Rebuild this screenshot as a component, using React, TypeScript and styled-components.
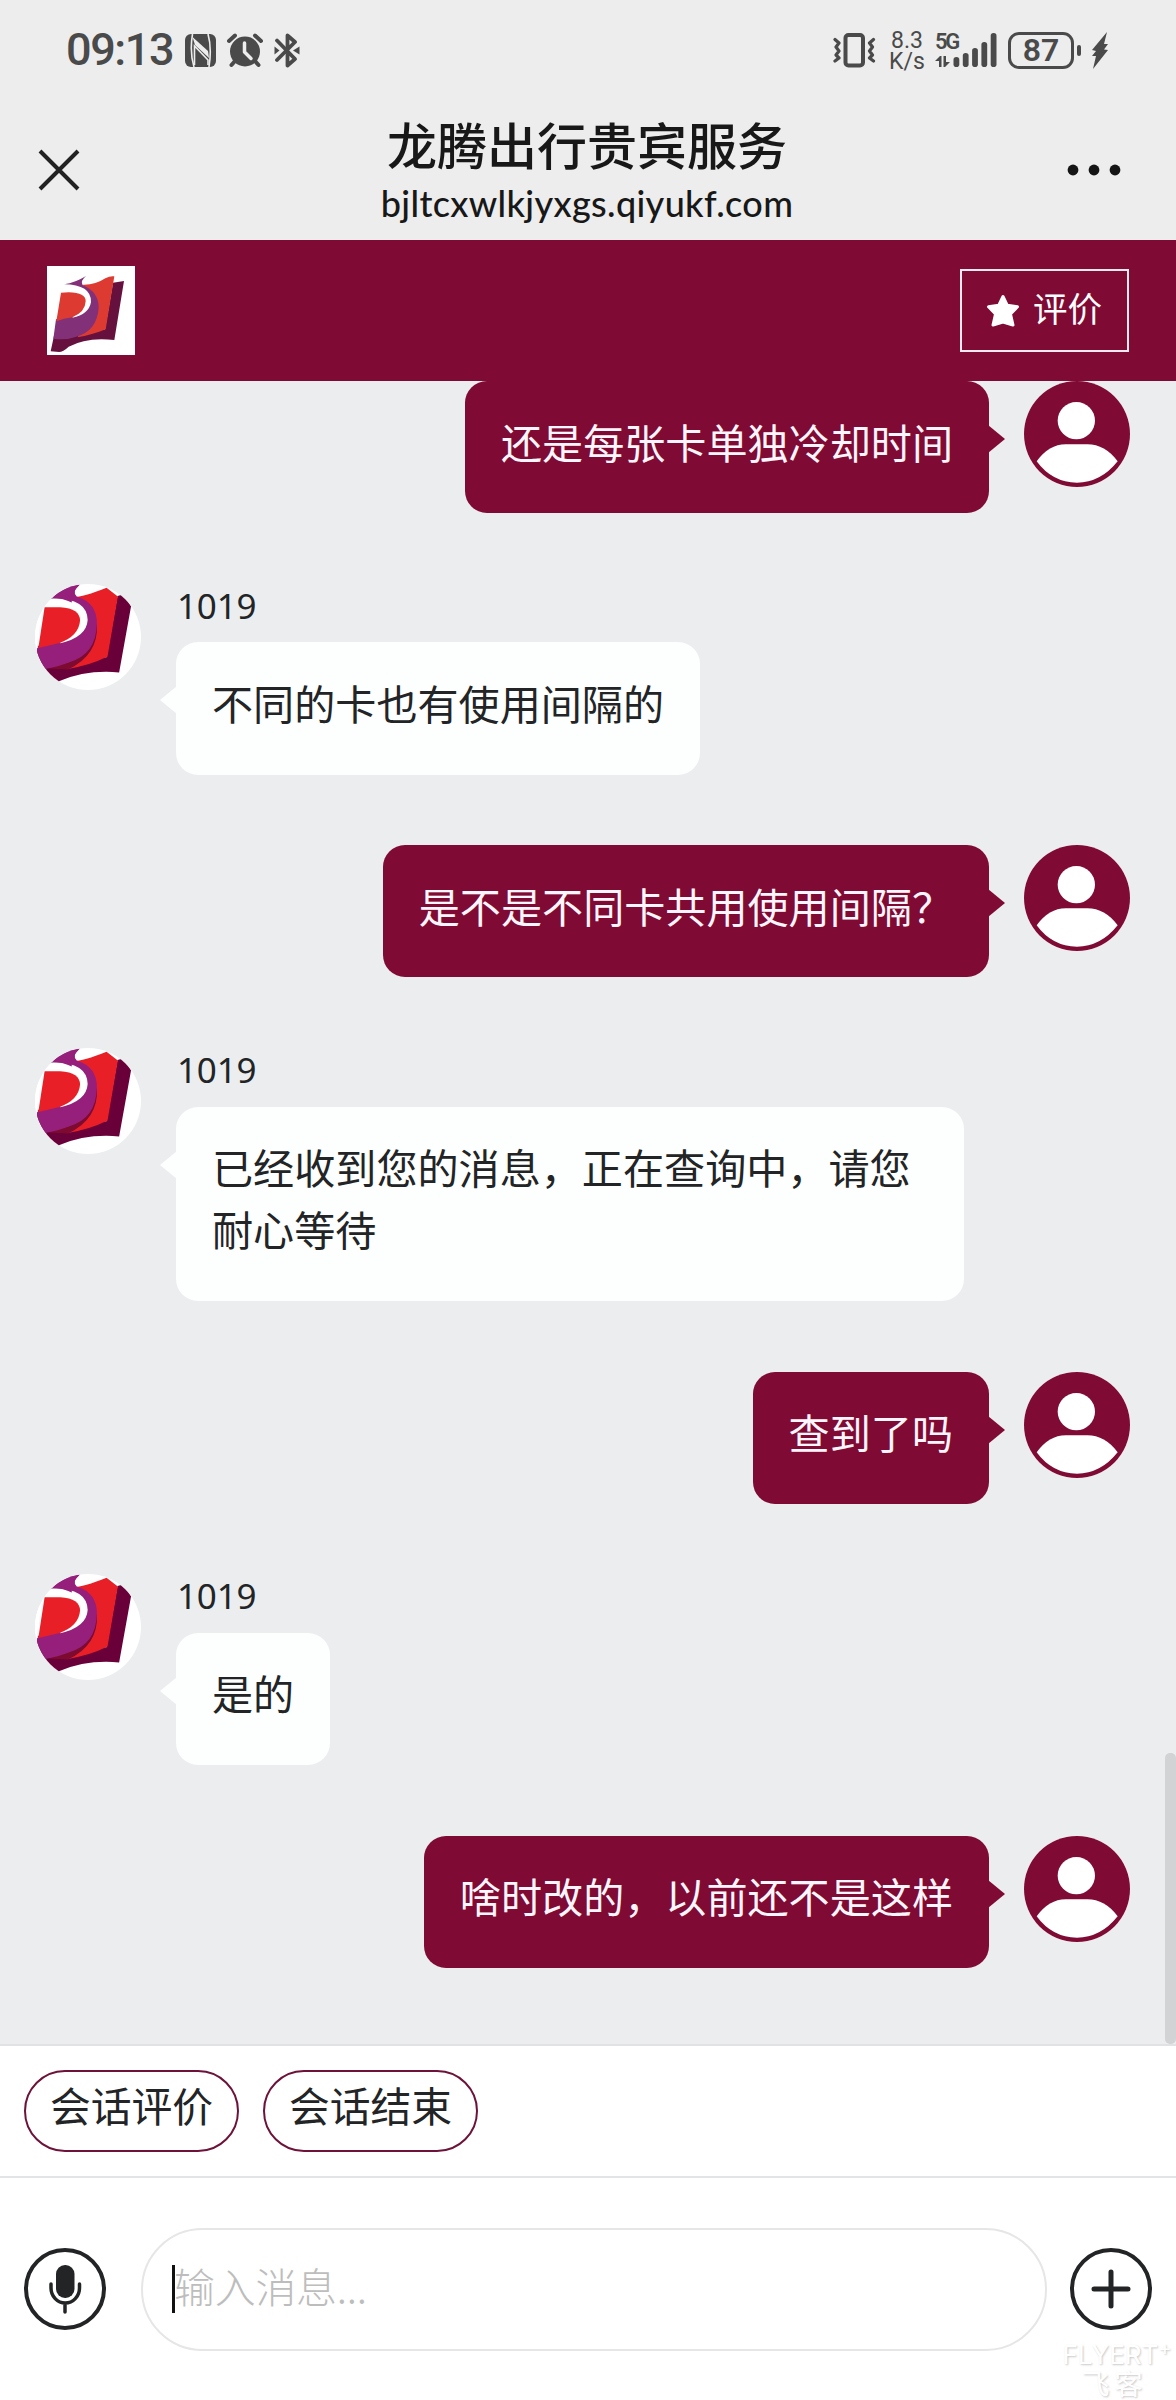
import React from 'react';
import styled, { createGlobalStyle } from 'styled-components';

const wine = '#7f0a34';
const ink = '#222426';
const statusInk = '#4a4a4a';

const GlobalStyle = createGlobalStyle`
  * { box-sizing: border-box; }
  body { margin: 0; background: #fff; }
`;

const Screen = styled.div`
  position: relative;
  display: flex;
  flex-direction: column;
  width: 1176px;
  height: 2400px;
  overflow: hidden;
  background: #fff;
  color: ${ink};
  font-family: 'Noto Sans CJK SC', sans-serif;
`;

/* ---------- status bar ---------- */

const StatusBar = styled.div`
  display: flex;
  flex: none;
  justify-content: space-between;
  align-items: center;
  height: 100px;
  padding: 0 68px 0 66px;
  background: #ededed;
  color: ${statusInk};
  font-family: Roboto, sans-serif;
`;

const StatusGroup = styled.div<{ $gap: number }>`
  display: flex;
  align-items: center;
  gap: ${p => p.$gap}px;
`;

const Clock = styled.span`
  width: 108px;
  font-family: Roboto, sans-serif;
  font-size: 45px;
  font-weight: 500;
  line-height: 54px;
  letter-spacing: -1.4px;
  white-space: nowrap;
`;

const Speed = styled.div`
  display: flex;
  flex-direction: column;
  align-items: center;
  width: 34px;
  font-size: 23px;
  line-height: 21px;
  margin: 2px 0 0 3px;
  white-space: nowrap;

  span {
    display: block;
    height: 21px;
    line-height: 21px;
  }
`;

const Network = styled.div`
  display: flex;
  align-items: flex-end;
  height: 34px;
`;

const NetworkType = styled.div`
  display: flex;
  flex-direction: column;
  justify-content: space-between;
  width: 18px;
  height: 34px;
  font-size: 22px;
  font-weight: 600;
  line-height: 17px;
  letter-spacing: -2.4px;
  white-space: nowrap;
`;

const BatteryWrap = styled.div`
  display: flex;
  align-items: center;
  gap: 3px;
`;

const BatteryBody = styled.div`
  display: flex;
  justify-content: center;
  align-items: center;
  width: 66px;
  height: 37px;
  border: 3px solid ${statusInk};
  border-radius: 11px;
  font-size: 32px;
  font-weight: 600;
  line-height: 31px;
`;

const BatteryNub = styled.div`
  width: 4px;
  height: 11px;
  border-radius: 2px;
  background: ${statusInk};
`;

/* ---------- navigation header ---------- */

const NavBar = styled.header`
  display: grid;
  grid-template-columns: 100px 1fr 100px;
  align-items: center;
  flex: none;
  height: 140px;
  padding: 0 37px;
  background: #ededed;
  color: #181818;
`;

const NavIcon = styled.div<{ $end?: boolean }>`
  display: flex;
  justify-content: ${p => (p.$end ? 'flex-end' : 'flex-start')};
  padding-right: ${p => (p.$end ? 18 : 0)}px;
`;

const Titles = styled.div`
  display: flex;
  flex-direction: column;
  align-items: center;
  height: 140px;
  padding: 10px 2px 0 0;
`;

const Title = styled.h1`
  margin: 0;
  font-size: 50px;
  font-weight: 500;
  line-height: 66px;
`;

const Domain = styled.div`
  margin-top: 5px;
  font-family: Lato, sans-serif;
  font-size: 36px;
  font-weight: 500;
  line-height: 44px;
  letter-spacing: 0.35px;
`;

/* ---------- brand bar ---------- */

const BrandBar = styled.div`
  display: flex;
  flex: none;
  justify-content: space-between;
  align-items: center;
  height: 141px;
  padding: 0 47px;
  background: ${wine};
`;

const BrandLogo = styled.div`
  width: 88px;
  height: 89px;
  background: #fff;
`;

const RateButton = styled.button`
  display: flex;
  align-items: center;
  gap: 13px;
  width: 169px;
  height: 83px;
  padding: 0 0 0 24px;
  border: 2px solid #f6eaf2;
  background: transparent;
  color: #fff;
  font-family: 'Noto Sans CJK SC', sans-serif;
  font-size: 34.5px;
  line-height: 40px;
`;

const RateLabel = styled.span`
  margin-top: -7px;
`;

/* ---------- conversation ---------- */

const Conversation = styled.main`
  position: relative;
  display: flex;
  flex: none;
  flex-direction: column;
  gap: 70.7px;
  height: 1665px;
  padding: 0 46px 0 35px;
  border-bottom: 2px solid #e0e2e4;
  background: #ebedef;
`;

const Row = styled.div<{ $mine: boolean }>`
  display: flex;
  flex-direction: ${p => (p.$mine ? 'row-reverse' : 'row')};
  align-items: flex-start;
  gap: 35px;
`;

const Avatar = styled.div`
  flex: none;
  width: 106px;
  height: 106px;
  border-radius: 50%;
  overflow: hidden;
  background: #fff;
`;

const Column = styled.div`
  display: flex;
  flex-direction: column;
  align-items: flex-start;
`;

const Sender = styled.div`
  height: 58.5px;
  padding-left: 1px;
  font-family: 'Noto Sans', sans-serif;
  font-size: 35px;
  line-height: 44px;
  letter-spacing: -0.2px;
`;

const Bubble = styled.div<{ $mine: boolean }>`
  position: relative;
  max-width: 788px;
  padding: 28.500px 36px 41.700px;
  border-radius: 22px;
  background: ${p => (p.$mine ? wine : '#fdfefe')};
  color: ${p => (p.$mine ? '#fff6fc' : ink)};
  font-size: 41.1px;
  line-height: 62px;

  &::after {
    content: '';
    position: absolute;
    top: 44px;
    ${p => (p.$mine ? 'right: -16px;' : 'left: -16px;')}
    border: 14px solid transparent;
    ${p =>
      p.$mine
        ? `border-left: 17px solid ${wine}; border-right: 0;`
        : 'border-right: 17px solid #fdfefe; border-left: 0;'}
  }
`;

const ScrollThumb = styled.div`
  position: absolute;
  right: 0;
  bottom: 0;
  width: 11px;
  height: 291px;
  border-radius: 5px;
  background: #d1d3d5;
`;

/* ---------- footer ---------- */

const QuickActions = styled.div`
  display: flex;
  flex: none;
  align-items: center;
  gap: 24px;
  height: 132px;
  padding: 0 24px;
  border-bottom: 2px solid #e3e4e5;
`;

const Chip = styled.button`
  width: 215px;
  height: 82px;
  padding: 0 0 12px;
  border: 2px solid #6d1238;
  border-radius: 41px;
  background: transparent;
  color: ${ink};
  font-family: 'Noto Sans CJK SC', sans-serif;
  font-size: 40.8px;
  line-height: 60px;
  white-space: nowrap;
`;

const Composer = styled.div`
  display: flex;
  flex: none;
  align-items: center;
  height: 222px;
  padding: 0 24px;
`;

const InputBox = styled.div`
  display: flex;
  align-items: center;
  width: 906px;
  height: 123px;
  margin: 0 23px 0 35px;
  padding-left: 29px;
  border: 2px solid #e6e6e6;
  border-radius: 62px;
`;

const Caret = styled.span`
  width: 3px;
  height: 48px;
  background: #111;
`;

const Placeholder = styled.span`
  margin: -9px 0 0 -1px;
  color: #bdbdbd;
  font-size: 41px;
  font-weight: 300;
  line-height: 60px;
  letter-spacing: -0.3px;
`;

const Watermark = styled.div`
  position: absolute;
  right: 0;
  bottom: 0;
  display: flex;
  flex-direction: column;
  align-items: center;
  width: 118px;
  color: #fff;
  text-shadow: 1px 1px 2px rgba(0, 0, 0, 0.22);
`;

const WatermarkLatin = styled.div`
  display: flex;
  align-items: flex-start;
  font-family: Inter, sans-serif;
  font-size: 26px;
  line-height: 26px;
  white-space: nowrap;
`;

const WatermarkPlus = styled.span`
  font-size: 20px;
  line-height: 12px;
`;

const WatermarkHan = styled.div`
  display: flex;
  gap: 5px;
  height: 32px;
  padding-right: 10px;
  font-size: 28px;
  line-height: 30px;
`;

/* ---------- drawings ---------- */

const NfcIcon = () => (
  <svg width="31" height="33" viewBox="0 0 31 33">
    <rect width="31" height="33" rx="6" fill={statusInk} />
    <path d="M7.500 0 Q4.500 18 9 33 M23 0 Q27 14 24 33" stroke="#ededed" strokeWidth="1.600" fill="none" />
    <path d="M7.500 3 L23 17 L24 24 L10 11Z" fill="#ededed" />
    <path d="M9.500 31 V12 L23 26 V31" stroke="#ededed" strokeWidth="1.600" fill="none" />
  </svg>
);

const AlarmIcon = () => (
  <svg width="36" height="35" viewBox="0 0 36 35">
    <circle cx="18" cy="18.500" r="15" fill={statusInk} />
    <path d="M2 8 L8 2.500 M28 2.500 L34 8 M8 28 L4.500 32 M28 28 L31.500 32" stroke={statusInk} strokeWidth="4" strokeLinecap="round" />
    <path d="M17.500 10 V19 L24 25.500" stroke="#ededed" strokeWidth="3.500" strokeLinecap="round" strokeLinejoin="round" fill="none" />
  </svg>
);

const BluetoothIcon = () => (
  <svg width="26" height="35" viewBox="0 0 26 35">
    <path d="M3 7.500 L21 26 L13.500 32.500 V22 M13.500 13 V2.500 L21 9 L3 27" stroke={statusInk} strokeWidth="3.800" strokeLinecap="round" strokeLinejoin="round" fill="none" />
    <path d="M0.500 13.500 L5.500 17.500 L0.500 21.500Z M25.500 13.500 L19 17.500 L25.500 21.500Z" fill={statusInk} />
  </svg>
);

const VibrateIcon = () => (
  <svg width="43" height="35" viewBox="0 0 43 35">
    <rect x="12.500" y="2" width="17.500" height="30.500" rx="3" stroke={statusInk} strokeWidth="4" fill="none" />
    <path d="M2 6.500 L6 10 L3 14 L6 18 L3 22 L6 25 L2 28 M40.500 6.500 L36.500 10 L39.500 14 L36.500 18 L39.500 22 L36.500 25 L40.500 28" stroke={statusInk} strokeWidth="3.200" fill="none" strokeLinecap="round" strokeLinejoin="round" />
  </svg>
);

const DataArrows = () => (
  <svg width="15" height="11" viewBox="0 0 15 11">
    <path d="M0 5 L5 0 H6.500 V11 H4 V5Z M8.500 0 H11 V6 H15 L10 11 H8.500Z" fill={statusInk} />
  </svg>
);

const SignalIcon = () => (
  <svg width="44" height="34" viewBox="0 0 44 34">
    {[10, 14, 19, 25, 34].map((h, i) => (
      <rect key={h} x={0.5 + i * 9.3} y={34 - h} width="5.800" height={h} rx="2.800" fill={statusInk} />
    ))}
  </svg>
);

const BoltIcon = () => (
  <svg width="16" height="37" viewBox="0 0 16 37">
    <path d="M15 0 L0 18 L4 19 L0 24 L4 24 L1 37 L16 18 L12 17.500 L16 12 L12 12Z" fill={statusInk} />
  </svg>
);

const CloseIcon = () => (
  <svg width="44" height="44" viewBox="0 0 44 44">
    <path d="M3 3 L41 41 M41 3 L3 41" stroke="#222" strokeWidth="4" />
  </svg>
);

const MoreIcon = () => (
  <svg width="54" height="12" viewBox="0 0 54 12">
    {[6, 27, 48].map(x => (
      <circle key={x} cx={x} cy="6" r="5.400" fill="#151515" />
    ))}
  </svg>
);

const StarIcon = () => (
  <svg width="34" height="34" viewBox="0 0 34 34">
    <path d="M17 2.500 L21.300 11.300 L31.500 12.800 L24.500 20 L27 31 L17 28 L7 31 L9.500 20 L2.500 12.800 L12.700 11.300Z" fill="#fff" stroke="#fff" strokeWidth="3" strokeLinejoin="round" />
  </svg>
);

const BookLogo = () => (
  <svg width="88" height="89" viewBox="0 0 264 267">
    <path d="M198 50 L231 45 L202 222 Q120 212 65 242 Q48 258 36 258 L11 256 L22 205 L100 205 L174 190Z" fill="#66103d" />
    <path d="M108 56 Q145 57 175 37 Q190 29 202 31 L176 190 Q140 205 92 214 L130 140Z" fill="#dd3b32" />
    <path d="M51 55 Q85 50 117 30 Q99 45 107 57 Q156 78 155 126 Q150 195 88 212 Q55 224 19 218 L27 160 L80 150 L120 100 L90 65Z" fill="#823078" />
    <path d="M51 55 Q133 56 132 108 Q126 145 76 155 L85 140 L95 90 L42 79 L44 58Z" fill="#fff" />
    <path d="M42 80 L65 79 Q117 80 116 106 Q115 138 76 154 Q50 157 28 166Z" fill="#dd3b32" />
  </svg>
);

const AgentPicture = () => (
  <svg width="106" height="106" viewBox="104 70 320 318">
    <path d="M353 105 L372 100 L394 136 L358 336 Q260 327 178 362 L150 388 L104 330 L112 262 L250 290 L320 290Z" fill="#6a0039" />
    <path d="M220 108 Q250 108 320 80 L354 107 L323 288 Q270 315 200 326 L260 240Z" fill="#e91f27" />
    <path d="M291 190 Q296 284 204 327 L145 324 L250 250Z" fill="#7c0b2f" />
    <path d="M150 115 L150 80 L240 70 Q214 92 230 107 Q292 126 291 190 Q288 282 208 305 Q175 318 132 326 L104 300 L112 256 L240 215 L235 130Z" fill="#961f7c" />
    <path d="M128 114 Q262 103 263 178 Q260 230 180 248 L190 190 L120 140 L112 262 L104 262 L104 100 L150 80 Q165 88 190 76 L158 108Z" fill="#fff" />
    <path d="M158 110 L190 76 L238 72 L215 98 L215 125 Q190 113 158 110Z" fill="#961f7c" />
    <path d="M133 139 L180 139 Q241 143 240 180 Q236 226 178 247 L114 262Z" fill="#e91f27" />
  </svg>
);

const UserPicture = () => (
  <svg width="106" height="106" viewBox="0 0 318 318">
    <rect width="318" height="318" fill={wine} />
    <circle cx="157" cy="119" r="56" fill="#fff" />
    <path d="M38 241 Q75 190 125 190 H190 Q243 190 281 241 Q230 305 159 305 Q85 305 38 241Z" fill="#fff" />
  </svg>
);

const MicIcon = () => (
  <svg width="82" height="82" viewBox="0 0 82 82">
    <circle cx="41" cy="41" r="39" stroke={ink} strokeWidth="4" fill="none" />
    <rect x="32" y="17" width="18.500" height="33" rx="9" fill={ink} />
    <path d="M27 36 V40 A14.200 15 0 0 0 55.500 40 V36 M41 56 V64" stroke={ink} strokeWidth="3.500" strokeLinecap="round" fill="none" />
  </svg>
);

const PlusIcon = () => (
  <svg width="82" height="82" viewBox="0 0 82 82">
    <circle cx="41" cy="41" r="39" stroke={ink} strokeWidth="4" fill="none" />
    <path d="M24 41 H58 M41 24 V58" stroke={ink} strokeWidth="5" strokeLinecap="round" />
  </svg>
);

/* ---------- content ---------- */

const messages = [
  { mine: true, text: '还是每张卡单独冷却时间' },
  { mine: false, text: '不同的卡也有使用间隔的' },
  { mine: true, text: '是不是不同卡共用使用间隔？' },
  { mine: false, text: '已经收到您的消息，正在查询中，请您耐心等待' },
  { mine: true, text: '查到了吗' },
  { mine: false, text: '是的' },
  { mine: true, text: '啥时改的，以前还不是这样' },
];

const Message = ({ mine, text }: { mine: boolean; text: string }) => (
  <Row $mine={mine}>
    <Avatar>{mine ? <UserPicture /> : <AgentPicture />}</Avatar>
    <Column>
      {!mine && <Sender>1019</Sender>}
      <Bubble $mine={mine}>{text}</Bubble>
    </Column>
  </Row>
);

export default function App() {
  return (
    <Screen>
      <GlobalStyle />
      <StatusBar>
        <StatusGroup $gap={11}>
          <Clock>09:13</Clock>
          <NfcIcon />
          <AlarmIcon />
          <BluetoothIcon />
        </StatusGroup>
        <StatusGroup $gap={11}>
          <VibrateIcon />
          <Speed>
            <span>8.3</span>
            <span>K/s</span>
          </Speed>
          <Network>
            <NetworkType>
              5G
              <DataArrows />
            </NetworkType>
            <SignalIcon />
          </Network>
          <BatteryWrap>
            <BatteryBody>87</BatteryBody>
            <BatteryNub />
          </BatteryWrap>
          <BoltIcon />
        </StatusGroup>
      </StatusBar>
      <NavBar>
        <NavIcon><CloseIcon /></NavIcon>
        <Titles>
          <Title>龙腾出行贵宾服务</Title>
          <Domain>bjltcxwlkjyxgs.qiyukf.com</Domain>
        </Titles>
        <NavIcon $end><MoreIcon /></NavIcon>
      </NavBar>
      <BrandBar>
        <BrandLogo><BookLogo /></BrandLogo>
        <RateButton>
          <StarIcon />
          <RateLabel>评价</RateLabel>
        </RateButton>
      </BrandBar>
      <Conversation>
        {messages.map(m => (
          <Message key={m.text} mine={m.mine} text={m.text} />
        ))}
        <ScrollThumb />
      </Conversation>
      <QuickActions>
        <Chip>会话评价</Chip>
        <Chip>会话结束</Chip>
      </QuickActions>
      <Composer>
        <MicIcon />
        <InputBox>
          <Caret />
          <Placeholder>输入消息...</Placeholder>
        </InputBox>
        <PlusIcon />
      </Composer>
      <Watermark>
        <WatermarkLatin>FLYERT<WatermarkPlus>+</WatermarkPlus></WatermarkLatin>
        <WatermarkHan><span>飞</span><span>客</span></WatermarkHan>
      </Watermark>
    </Screen>
  );
}
